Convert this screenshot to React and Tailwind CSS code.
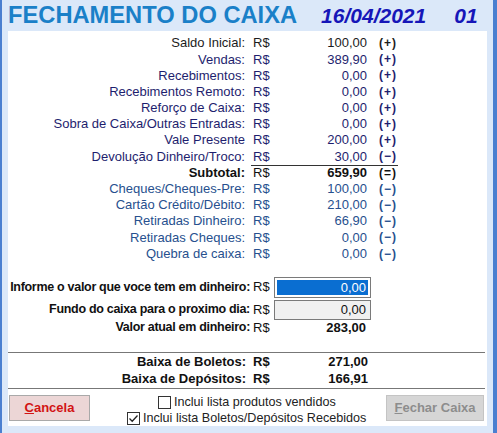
import React from 'react';

const entradas = [
  { label: 'Saldo Inicial:', value: '100,00', sign: '(+)', color: 'text-[#1c1c1c]' },
  { label: 'Vendas:', value: '389,90', sign: '(+)', color: 'text-[#1e1e6e]' },
  { label: 'Recebimentos:', value: '0,00', sign: '(+)', color: 'text-[#1e1e6e]' },
  { label: 'Recebimentos Remoto:', value: '0,00', sign: '(+)', color: 'text-[#1e1e6e]' },
  { label: 'Reforço de Caixa:', value: '0,00', sign: '(+)', color: 'text-[#1e1e6e]' },
  { label: 'Sobra de Caixa/Outras Entradas:', value: '0,00', sign: '(+)', color: 'text-[#1e1e6e]' },
  { label: 'Vale Presente', value: '200,00', sign: '(+)', color: 'text-[#1e1e6e]' },
  { label: 'Devolução Dinheiro/Troco:', value: '30,00', sign: '(−)', color: 'text-[#1e1e6e]' },
];

const saidas = [
  { label: 'Cheques/Cheques-Pre:', value: '100,00' },
  { label: 'Cartão Crédito/Débito:', value: '210,00' },
  { label: 'Retiradas Dinheiro:', value: '66,90' },
  { label: 'Retiradas Cheques:', value: '0,00' },
  { label: 'Quebra de caixa:', value: '0,00' },
];

function Row({ label, value, sign, color }) {
  return (
    <div className={`flex h-[16.2px] shrink-0 items-center ${color}`}>
      <div className="w-[237px] text-right whitespace-nowrap">{label}</div>
      <div className="ml-[8px] w-[22px]">R$</div>
      <div className="w-[92px] text-right">{value}</div>
      <div className="ml-[12px] tracking-[1px] text-[12px] font-bold">{sign}</div>
    </div>
  );
}

export default function App() {
  return (
    <div
      className="w-[497px] h-[433px] bg-[#dbe8f9] border-l-[2px] border-r-[4px] border-[#4a7fd0] flex flex-col overflow-hidden"
      style={{ fontFamily: '"Liberation Sans", Arial, sans-serif' }}
    >
      {/* Title */}
      <div className="h-[31px] shrink-0 flex items-center pl-[6px] font-bold leading-none whitespace-nowrap">
        <span className="text-[23.7px] text-[#1a80c8]">FECHAMENTO DO CAIXA</span>
        <span className="ml-[24px] text-[21px] italic text-[#1616b8]">16/04/2021</span>
        <span className="ml-[28px] text-[21px] italic text-[#1616b8]">01</span>
      </div>

      {/* Panel */}
      <div className="mx-[6px] flex-1 min-h-0 overflow-hidden bg-white flex flex-col text-[13px] pt-[4px] mb-[7px]">
        {entradas.map((r) => (
          <Row key={r.label} {...r} />
        ))}

        {/* Subtotal */}
        <div className="flex h-[16.2px] shrink-0 items-center text-[#111]">
          <div className="w-[237px] text-right font-bold">Subtotal:</div>
          <div className="ml-[6px] pl-[2px] w-[147px] flex items-center border-t border-[#333] h-full">
            <div className="w-[22px]">R$</div>
            <div className="w-[92px] text-right font-bold">659,90</div>
            <div className="ml-[12px] tracking-[1px] text-[12px] font-bold">(=)</div>
          </div>
        </div>

        {saidas.map((r) => (
          <Row key={r.label} {...r} sign="(−)" color="text-[#27508e]" />
        ))}

        {/* Inputs */}
        <div className="mt-[15px] shrink-0 flex items-center h-[21px] text-[#111]">
          <div className="w-[242px] text-right font-bold whitespace-nowrap text-[12.5px] tracking-[-0.3px]">
            Informe o valor que voce tem em dinheiro:
          </div>
          <div className="ml-[3px] w-[21px]">R$</div>
          <div className="w-[97px] h-[21px] border border-[#7a7a7a] p-[2px] flex">
            <div className="flex-1 bg-[#0a6ed1] text-white text-right pr-[2px] leading-[15px]">0,00</div>
          </div>
        </div>
        <div className="mt-[2px] shrink-0 flex items-center h-[20px] text-[#111]">
          <div className="w-[242px] text-right font-bold whitespace-nowrap text-[12.5px] tracking-[-0.3px]">
            Fundo do caixa para o proximo dia:
          </div>
          <div className="ml-[3px] w-[21px]">R$</div>
          <div className="w-[97px] h-[20px] border border-[#7a7a7a] bg-[#f0f0f0] text-right pr-[4px] leading-[18px]">
            0,00
          </div>
        </div>
        <div className="flex shrink-0 items-center h-[16px] text-[#111]">
          <div className="w-[242px] text-right font-bold whitespace-nowrap text-[12.5px] tracking-[-0.3px]">
            Valor atual em dinheiro:
          </div>
          <div className="ml-[3px] w-[21px]">R$</div>
          <div className="w-[92px] text-right font-bold">283,00</div>
        </div>

        {/* Baixas */}
        <div className="mt-[16px] mr-[2px] shrink-0 border-t border-[#777]" />
        <div className="text-[#111] font-bold shrink-0">
          <div className="flex items-center h-[18px]">
            <div className="w-[238px] text-right">Baixa de Boletos:</div>
            <div className="ml-[7px] w-[22px]">R$</div>
            <div className="w-[93px] text-right">271,00</div>
          </div>
          <div className="flex items-center h-[17px]">
            <div className="w-[238px] text-right">Baixa de Depósitos:</div>
            <div className="ml-[7px] w-[22px]">R$</div>
            <div className="w-[93px] text-right">166,91</div>
          </div>
        </div>
        <div className="mr-[2px] shrink-0 border-t border-[#777]" />

        {/* Footer */}
        <div className="flex shrink-0 items-start mt-[6px] text-[12.6px] text-[#222]">
          <button className="ml-[1px] w-[81px] h-[26px] bg-[#ecd6d6] border border-[#a9a9a9] text-[#d21414] font-bold text-[13px]">
            <span className="underline">C</span>ancela
          </button>
          <div className="ml-[37px] flex flex-col">
            <label className="flex items-center h-[16px] ml-[31px]">
              <span className="w-[13px] h-[13px] border border-[#333] bg-white" />
              <span className="ml-[3px]">Inclui lista produtos vendidos</span>
            </label>
            <label className="flex items-center h-[16px]">
              <span className="w-[13px] h-[13px] border border-[#333] bg-white flex items-center justify-center">
                <svg width="11" height="11" viewBox="0 0 11 11">
                  <path d="M1.5 5.5 L4.2 8.2 L9.5 2.5" fill="none" stroke="#222" strokeWidth="1.3" />
                </svg>
              </span>
              <span className="ml-[3px]">Inclui lista Boletos/Depósitos Recebidos</span>
            </label>
          </div>
          <button className="ml-auto mr-[3px] w-[98px] h-[26px] bg-[#d6d6d6] border border-[#c4c4c4] text-[#8d8d8d] font-bold text-[13px]">
            <span className="underline">F</span>echar Caixa
          </button>
        </div>
      </div>
    </div>
  );
}
